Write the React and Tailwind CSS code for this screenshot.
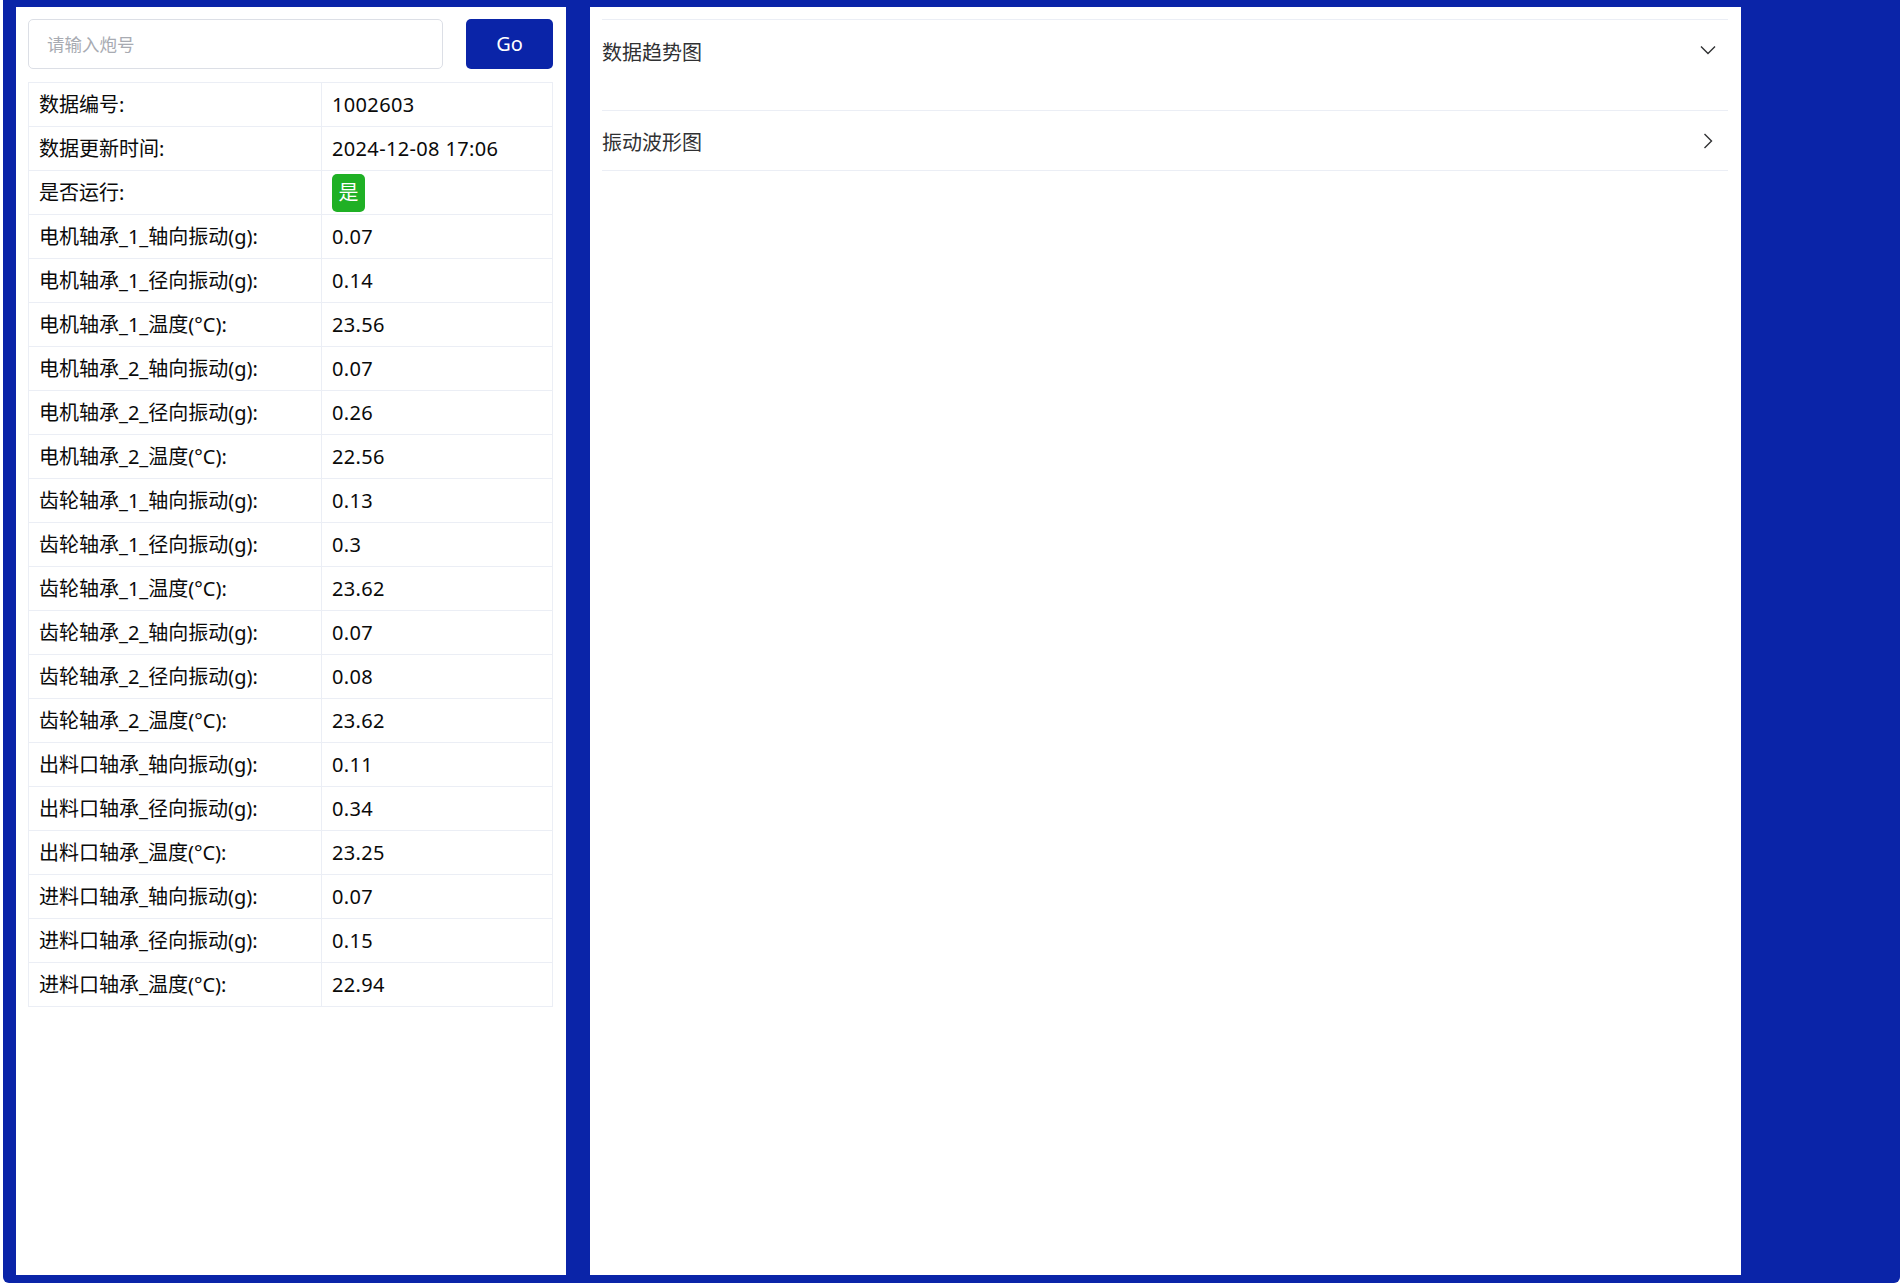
import React from "react";

const rows = [
  ["数据编号:", "1002603"],
  ["数据更新时间:", "2024-12-08 17:06"],
  ["是否运行:", "__badge__"],
  ["电机轴承_1_轴向振动(g):", "0.07"],
  ["电机轴承_1_径向振动(g):", "0.14"],
  ["电机轴承_1_温度(°C):", "23.56"],
  ["电机轴承_2_轴向振动(g):", "0.07"],
  ["电机轴承_2_径向振动(g):", "0.26"],
  ["电机轴承_2_温度(°C):", "22.56"],
  ["齿轮轴承_1_轴向振动(g):", "0.13"],
  ["齿轮轴承_1_径向振动(g):", "0.3"],
  ["齿轮轴承_1_温度(°C):", "23.62"],
  ["齿轮轴承_2_轴向振动(g):", "0.07"],
  ["齿轮轴承_2_径向振动(g):", "0.08"],
  ["齿轮轴承_2_温度(°C):", "23.62"],
  ["出料口轴承_轴向振动(g):", "0.11"],
  ["出料口轴承_径向振动(g):", "0.34"],
  ["出料口轴承_温度(°C):", "23.25"],
  ["进料口轴承_轴向振动(g):", "0.07"],
  ["进料口轴承_径向振动(g):", "0.15"],
  ["进料口轴承_温度(°C):", "22.94"],
];

const font = { fontFamily: '"Noto Sans", "Noto Sans CJK SC", sans-serif' };

function ChevronDown() {
  return (
    <svg width="16" height="16" viewBox="0 0 16 16" fill="none">
      <path d="M1 4.5 L8 11.5 L15 4.5" stroke="#303133" strokeWidth="1.4" />
    </svg>
  );
}

function ChevronRight() {
  return (
    <svg width="16" height="16" viewBox="0 0 16 16" fill="none">
      <path d="M4.5 1 L11.5 8 L4.5 15" stroke="#303133" strokeWidth="1.4" />
    </svg>
  );
}

export default function App() {
  return (
    <div className="w-full h-[1283px] bg-white pl-[3px]" style={font}>
      <div className="h-full bg-[#0a24a8] rounded-b-[6px] flex pt-[7px] pb-[8px] pl-[13px]">
        {/* Left panel */}
        <div className="w-[550px] h-full bg-white pt-[12px] pl-[12px] pr-[13px]">
          <div className="flex justify-between items-center h-[50px]">
            <div className="w-[415px] h-[50px] border border-[#dcdfe6] rounded-[5px] flex items-center pl-[18px]">
              <input
                className="w-full outline-none text-[17.5px] placeholder:text-[#a8abb2] text-[#606266]"
                placeholder="请输入炮号"
              />
            </div>
            <button className="w-[87px] h-[50px] bg-[#0a24a8] rounded-[5px] text-white text-[20px] flex items-center justify-center">
              Go
            </button>
          </div>
          <table className="mt-[13px] w-full border-collapse">
            <tbody>
              {rows.map(([label, value], i) => (
                <tr key={i} className="h-[44px]">
                  <td className="w-[293px] border border-[#ebeef5] px-[10px] text-[20px] text-[#0a0a0a] leading-none align-middle">
                    {label}
                  </td>
                  <td className="border border-[#ebeef5] px-[10px] text-[20px] text-[#0a0a0a] leading-none align-middle tracking-[0.35px]">
                    {value === "__badge__" ? (
                      <span className="inline-flex items-center justify-center w-[33px] h-[38px] bg-[#1fb025] rounded-[5px] text-white text-[20px] tracking-normal">
                        是
                      </span>
                    ) : (
                      value
                    )}
                  </td>
                </tr>
              ))}
            </tbody>
          </table>
        </div>

        {/* Gap */}
        <div className="w-[24px]" />

        {/* Right panel */}
        <div className="w-[1151px] h-full bg-white pt-[12px] pl-[12px] pr-[13px]">
          <div className="border-t border-[#ebeef5]">
            <div>
              <div className="h-[60px] flex items-center justify-between text-[20px] text-[#303133]">
                <span className="pt-[5px]">数据趋势图</span>
                <span className="mr-[12px] flex items-center">
                  <ChevronDown />
                </span>
              </div>
              <div className="h-[31px] border-b border-[#ebeef5]" />
            </div>
            <div className="h-[60px] flex items-center justify-between text-[20px] text-[#303133] border-b border-[#ebeef5]">
              <span className="pt-[5px]">振动波形图</span>
              <span className="mr-[12px] flex items-center">
                <ChevronRight />
              </span>
            </div>
          </div>
        </div>
      </div>
    </div>
  );
}
